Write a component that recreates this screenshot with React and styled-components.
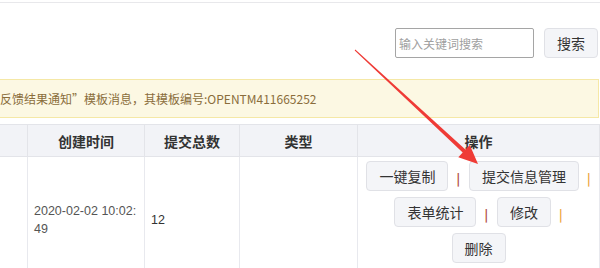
import { Fragment } from 'react';
import styled, { createGlobalStyle } from 'styled-components';

const GlobalStyle = createGlobalStyle`
  html, body {
    margin: 0;
    padding: 0;
    background: #fff;
    overflow: hidden;
  }
  body {
    font-family: "Noto Sans CJK SC", "Noto Sans", sans-serif;
    color: #333;
  }
`;

const Page = styled.div`
  position: relative;
  width: 600px;
  height: 268px;
  overflow: hidden;
`;

const TopRule = styled.div`
  height: 2px;
  border-bottom: 1px solid #e8e8eb;
`;

const Toolbar = styled.div`
  display: flex;
  justify-content: flex-end;
  align-items: center;
  gap: 10px;
  padding: 25px 2px 0 0;
`;

const SearchInput = styled.input`
  box-sizing: border-box;
  width: 139px;
  height: 30px;
  padding: 0 3px;
  border: 1px solid #a5a5a5;
  border-radius: 2px;
  font-family: inherit;
  font-size: 12px;
  outline: none;
  &::placeholder {
    color: #a0a0a0;
  }
`;

const Button = styled.button`
  box-sizing: border-box;
  height: 30px;
  padding: 0 12px;
  background: #f4f5f8;
  border: 1px solid #e0e1e6;
  border-radius: 4px;
  font-family: inherit;
  font-size: 14px;
  color: #333;
  white-space: nowrap;
  cursor: pointer;
`;

const Alert = styled.div`
  box-sizing: border-box;
  height: 39px;
  margin: 21px 1px 0 0;
  display: flex;
  align-items: center;
  background: #fcf8e3;
  border: 1px solid #f5e8a6;
  border-left: none;
  color: #8a6d3b;
  font-size: 12px;
  white-space: nowrap;
  overflow: hidden;
`;

const AlertText = styled.span`
  margin-left: -12px;
`;

const Table = styled.table`
  margin: 6px 0 0 -73px;
  border-collapse: collapse;
  table-layout: fixed;
  width: 672px;
`;

const Th = styled.th`
  height: 31px;
  padding: 0;
  background: #f2f3f7;
  border: 1px solid #e3e4e9;
  font-size: 14px;
  font-weight: bold;
  color: #333;
  text-align: center;
`;

const Td = styled.td`
  padding: ${(p) => (p.$actions ? '4px 6px 19px' : '0 4px 0 6px')};
  border-left: 1px solid #e8e9ee;
  border-right: 1px solid #e8e9ee;
  vertical-align: ${(p) => (p.$actions ? 'top' : 'middle')};
  font-family: "Liberation Sans", "Noto Sans CJK SC", sans-serif;
  font-size: 12.5px;
  line-height: 18px;
  color: ${(p) => p.$color || '#555'};
  word-break: break-all;
`;

const ActionList = styled.div`
  display: flex;
  flex-direction: column;
  gap: 6px;
  font-family: "Noto Sans CJK SC", sans-serif;
`;

const ActionLine = styled.div`
  display: flex;
  justify-content: center;
  align-items: center;
`;

const Sep = styled.span`
  margin: 4px 9px 0 8px;
  font-size: 12px;
  line-height: 12px;
  font-weight: bold;
  color: ${(p) => (p.$tone === 'orange' ? '#eda43a' : '#b0483e')};
  &:last-child {
    margin-right: 0;
  }
`;

const ArrowLayer = styled.svg`
  position: absolute;
  left: 0;
  top: 0;
  pointer-events: none;
`;

function arrowPoints() {
  const S = [355, 50];
  const T = [478, 164];
  const len = Math.hypot(T[0] - S[0], T[1] - S[1]);
  const d = [(T[0] - S[0]) / len, (T[1] - S[1]) / len];
  const p = [-d[1], d[0]];
  const head = 19;
  const B = [T[0] - d[0] * head, T[1] - d[1] * head];
  const at = (o, k) => [o[0] + p[0] * k, o[1] + p[1] * k];
  const pts = [at(S, 0.5), at(B, 2), at(B, 8.5), T, at(B, -8.5), at(B, -2), at(S, -0.5)];
  return pts.map((q) => q[0].toFixed(1) + ',' + q[1].toFixed(1)).join(' ');
}

const lines = [
  [{ label: '一键复制' }, { label: '提交信息管理' }],
  [{ label: '表单统计' }, { label: '修改' }],
  [{ label: '删除', last: true }],
];

export default function App() {
  return (
    <Page>
      <GlobalStyle />
      <TopRule />
      <Toolbar>
        <SearchInput placeholder="输入关键词搜索" />
        <Button>搜索</Button>
      </Toolbar>
      <Alert>
        <AlertText>“反馈结果通知”模板消息，其模板编号:OPENTM411665252</AlertText>
      </Alert>
      <Table>
        <colgroup>
          <col style={{ width: 100 }} />
          <col style={{ width: 117 }} />
          <col style={{ width: 95 }} />
          <col style={{ width: 118 }} />
          <col style={{ width: 242 }} />
        </colgroup>
        <thead>
          <tr>
            <Th />
            <Th>创建时间</Th>
            <Th>提交总数</Th>
            <Th>类型</Th>
            <Th>操作</Th>
          </tr>
        </thead>
        <tbody>
          <tr>
            <Td />
            <Td>2020-02-02 10:02:49</Td>
            <Td $color="#333">12</Td>
            <Td />
            <Td $actions>
              <ActionList>
                {lines.map((line, i) => (
                  <ActionLine key={i}>
                    {line.map((a, j) => (
                      <Fragment key={a.label}>
                        <Button>{a.label}</Button>
                        {!a.last && <Sep $tone={j === 0 ? 'red' : 'orange'}>|</Sep>}
                      </Fragment>
                    ))}
                  </ActionLine>
                ))}
              </ActionList>
            </Td>
          </tr>
        </tbody>
      </Table>
      <ArrowLayer width="600" height="268">
        <polygon points={arrowPoints()} fill="#ef3b36" />
      </ArrowLayer>
    </Page>
  );
}
